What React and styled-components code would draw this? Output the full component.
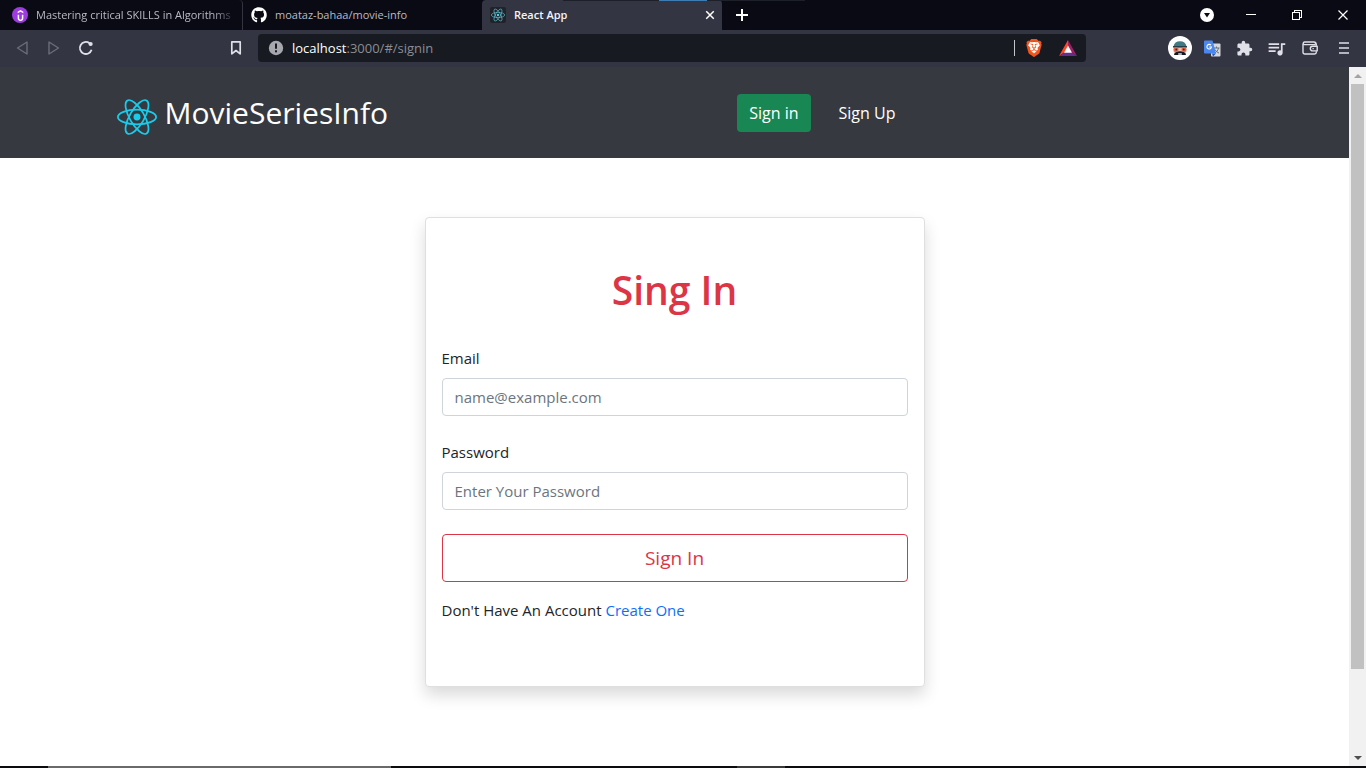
import React from "react";
import styled, { createGlobalStyle, css } from "styled-components";
import { SiUdemy, SiBrave } from "react-icons/si";
import { FaGithub } from "react-icons/fa";
import { MdExtension, MdQueueMusic } from "react-icons/md";

const GlobalStyle = createGlobalStyle`
  *, *::before, *::after { box-sizing: border-box; }
  body {
    margin: 0;
    font-family: "Segoe UI", "Open Sans", "Noto Sans", sans-serif;
    font-size: 15px;
    line-height: 24px;
    color: #212529;
    background: #fff;
  }
  button, input { font: inherit; }
`;

const Window = styled.div`
  display: flex;
  flex-direction: column;
  min-height: 100vh;
`;

const plainButton = css`
  display: flex;
  align-items: center;
  justify-content: center;
  padding: 0;
  border: 0;
  background: none;
  cursor: pointer;
`;

/* ---------- tab strip ---------- */

const TabStrip = styled.header`
  position: relative;
  display: flex;
  height: 30px;
  background: #0a0a15;
`;

const TopEdge = styled.div`
  position: absolute;
  top: 0;
  left: 563px;
  display: flex;
  justify-content: center;
  width: 242px;
  height: 1px;
  background: #1d1f29;

  &::after {
    content: "";
    width: 48px;
    margin-right: 2px;
    background: #3f7cb3;
  }
`;

const TabList = styled.div`
  display: flex;
  padding-left: 4px;
`;

const Tab = styled.div`
  display: flex;
  align-items: center;
  gap: 8px;
  width: ${(p) => (p.$active ? 240 : 239)}px;
  padding: 0 5px 0 8px;
  font-size: 11px;
  line-height: 16px;
  color: ${(p) => (p.$active ? "#f4f4f8" : "#b9bac4")};
  font-weight: ${(p) => (p.$active ? 600 : 400)};
  background: ${(p) => (p.$active ? "#333542" : "transparent")};
  border-radius: 4px 4px 0 0;
  border-right: 1px solid ${(p) => (p.$divided ? "#33343f" : "transparent")};
`;

const TabTitle = styled.span`
  flex: 1;
  min-width: 0;
  overflow: hidden;
  white-space: nowrap;
  ${(p) =>
    p.$fade &&
    css`
      mask-image: linear-gradient(to right, #000 88%, transparent);
    `}
`;

const UdemyBadge = styled.span`
  display: flex;
  align-items: center;
  justify-content: center;
  width: 16px;
  height: 16px;
  border-radius: 50%;
  background: #9d3be0;
  color: #fff;
`;

const ReactBadge = styled.span`
  display: flex;
  align-items: center;
  justify-content: center;
  width: 16px;
  height: 16px;
  border-radius: 2px;
  background: #20232a;
`;

const TabClose = styled.button`
  ${plainButton}
  width: 12px;
  height: 16px;
`;

const NewTab = styled.button`
  ${plainButton}
  width: 40px;
`;

const WindowControls = styled.div`
  display: flex;
  margin-left: auto;
`;

const WindowButton = styled.button`
  ${plainButton}
  width: ${(p) => (p.$narrow ? 42 : 46)}px;
`;

/* ---------- toolbar ---------- */

const Toolbar = styled.div`
  display: flex;
  align-items: center;
  height: 37px;
  padding: 0 6px 1px;
  background: #333542;
`;

const ToolButton = styled.button`
  ${plainButton}
  width: ${(p) => (p.$wide ? 36 : 32)}px;
  height: 32px;
  color: ${(p) => (p.$dim ? "#6b6d79" : "#dfe0e8")};
`;

const BookmarkSlot = styled.div`
  display: flex;
  justify-content: flex-end;
  flex: 0 1 156px;
  padding-right: 6px;
`;

const AddressBar = styled.div`
  display: flex;
  align-items: center;
  flex: 1 1 828px;
  height: 28px;
  padding: 0 1px 0 10px;
  background: #171a21;
  border-radius: 4px;
`;

const Url = styled.span`
  flex: 1;
  margin-left: 8px;
  font-size: 13px;
  line-height: 20px;
  color: #8b8d93;

  b { font-weight: 400; color: #fff; }
`;

const AddressDivider = styled.span`
  width: 1px;
  height: 16px;
  margin-right: 2px;
  background: #c4c5ca;
`;

const AddressButton = styled(ToolButton)`
  width: 34px;
`;

const ToolGroup = styled.div`
  display: flex;
  justify-content: flex-end;
  flex: 0 1 274px;
`;

/* ---------- page ---------- */

const Viewport = styled.div`
  display: flex;
  flex: 1;
`;

const Page = styled.div`
  flex: 1;
  min-width: 0;
`;

const NavBar = styled.nav`
  background: #363a40;
`;

const NavInner = styled.div`
  display: flex;
  align-items: center;
  max-width: 1140px;
  min-height: 91px;
  margin: 0 auto;
  padding: 0 12px;
`;

const Brand = styled.a`
  display: flex;
  align-items: center;
  gap: 8px;
  font-size: 30px;
  line-height: 48px;
  color: #fff;
  text-decoration: none;

  svg { margin-top: 8px; }
`;

const NavLinks = styled.div`
  display: flex;
  flex: 1;
  justify-content: center;
  gap: 16px;
  padding-left: 24px;
`;

const NavLink = styled.a`
  padding: 7px 12px;
  border-radius: 4px;
  font-size: 16px;
  color: #fff;
  text-decoration: none;
  background: ${(p) => (p.$active ? "#198754" : "transparent")};
`;

const Main = styled.main`
  display: flex;
  justify-content: center;
  padding: 59px 16px 48px;
`;

const Card = styled.form`
  width: 100%;
  max-width: 500px;
  padding: 48px 16px 64px;
  border: 1px solid #dfdfdf;
  border-radius: 4px;
  background: #fff;
  box-shadow: 0 8px 16px rgba(0, 0, 0, 0.15);
`;

const Title = styled.h1`
  margin: 0 0 32px;
  font-size: 39px;
  line-height: 48px;
  font-weight: 600;
  text-align: center;
  color: #dc3545;
`;

const Field = styled.div`
  margin-bottom: 24px;
`;

const Label = styled.label`
  display: block;
  margin-bottom: 8px;
`;

const Input = styled.input`
  display: block;
  width: 100%;
  height: 38px;
  padding: 6px 12px;
  border: 1px solid #ced4da;
  border-radius: 4px;
  background: #fff;
  color: #212529;

  &::placeholder { color: #6c757d; opacity: 1; }
`;

const Submit = styled.button`
  display: block;
  width: 100%;
  height: 48px;
  margin-bottom: 16px;
  border: 1px solid #dc3545;
  border-radius: 4px;
  background: #fff;
  color: #dc3545;
  font-size: 19px;
  line-height: 30px;
  cursor: pointer;
`;

const Hint = styled.p`
  margin: 0;

  a { color: #0d6efd; text-decoration: none; }
`;

/* ---------- scrollbar and taskbar edge ---------- */

const ScrollRail = styled.div`
  display: flex;
  flex-direction: column;
  width: 17px;
  background: #f1f1f1;
`;

const ScrollArrow = styled.button`
  ${plainButton}
  height: 17px;
`;

const ScrollTrack = styled.div`
  flex: 1;
  padding: 0 2px;
`;

const ScrollThumb = styled.div`
  height: 88%;
  background: #c1c1c1;
`;

const TaskbarEdge = styled.div`
  display: flex;
  gap: 346px;
  height: 2px;
  padding-left: 48px;
  background: #0c0c0f;
`;

const TaskbarItem = styled.span`
  width: ${(p) => p.$width}px;
  background: ${(p) => p.$tone};
`;

/* ---------- drawings ---------- */

const Atom = ({ width, height, color, stroke = 1 }) => (
  <svg width={width} height={height} viewBox="-11.5 -10.2 23 20.4" aria-hidden="true">
    <circle r="2" fill={color} />
    <g fill="none" stroke={color} strokeWidth={stroke}>
      <ellipse rx="11" ry="4.2" />
      <ellipse rx="11" ry="4.2" transform="rotate(60)" />
      <ellipse rx="11" ry="4.2" transform="rotate(120)" />
    </g>
  </svg>
);

const Triangle = ({ flip }) => (
  <svg width="14" height="16" viewBox="0 0 14 16" fill="none" stroke="currentColor" strokeWidth="1.4" strokeLinejoin="round">
    <path d={flip ? "M2 2v12l9.500-6z" : "M12 2v12L2.500 8z"} />
  </svg>
);

const Reload = () => (
  <svg width="16" height="16" viewBox="0 0 16 16" fill="none" stroke="currentColor" strokeWidth="1.8">
    <path d="M13.600 9.800A6 6 0 1 1 11.500 3.200" />
    <circle cx="12.600" cy="4" r="2.100" fill="currentColor" stroke="none" />
  </svg>
);

const Bookmark = () => (
  <svg width="12" height="16" viewBox="0 0 12 16" fill="none" stroke="currentColor" strokeWidth="1.700" strokeLinejoin="round">
    <path d="M1.800 1.800h8.400v12L6 10.500l-4.200 3.300z" />
  </svg>
);

const InfoDot = () => (
  <svg width="16" height="16" viewBox="0 0 16 16" aria-hidden="true">
    <circle cx="8" cy="8" r="7.200" fill="#a6a8ae" />
    <path d="M8 3.500v5.200" stroke="#171a21" strokeWidth="2" />
    <rect x="7" y="10.300" width="2" height="2" fill="#171a21" />
  </svg>
);

const BraveLion = () => (
  <svg width="18" height="18" viewBox="0 0 24 24" aria-hidden="true">
    <path d="M5 4h14l1 5-3 9-5 4-5-4-3-9z" fill="#fff" />
    <SiBrave size={24} color="#f2541b" />
  </svg>
);

const BatTriangle = () => (
  <svg width="18" height="16" viewBox="0 0 18 16" aria-hidden="true">
    <path d="M9 0L0 16l9-6z" fill="#ff4724" />
    <path d="M9 0l9 16-9-6z" fill="#9e1f63" />
    <path d="M0 16h18l-9-6z" fill="#662d91" />
    <path d="M9 5.500l4 7.200H5z" fill="#fff" />
  </svg>
);

const Avatar = () => (
  <svg width="24" height="24" viewBox="0 0 24 24" aria-hidden="true">
    <circle cx="12" cy="12" r="12" fill="#fff" />
    <path d="M6 10.500h12l.5 5-1.500 3.500H7l-1.500-3.500z" fill="#f0c4ae" />
    <path d="M5.500 10.500C6 7 8.500 5.200 12 5.200s6 1.800 6.500 5.300z" fill="#3f7a85" />
    <path d="M5 10h14v1.600H5z" fill="#27404a" />
    <path d="M6 19c.3-2.600 2.500-3.800 6-3.800s5.700 1.200 6 3.800z" fill="#171a24" />
    <circle cx="8" cy="13.600" r="2.500" fill="#e2674c" />
    <circle cx="16" cy="13.600" r="2.500" fill="#e2674c" />
    <circle cx="8.300" cy="13.400" r="1" fill="#2b2f3a" />
    <circle cx="15.700" cy="13.400" r="1" fill="#2b2f3a" />
    <path d="M10.200 18h3.600" stroke="#e8ecef" strokeWidth="1.400" />
  </svg>
);

const Translate = () => (
  <svg width="17" height="17" viewBox="0 0 17 17" aria-hidden="true">
    <rect x="7" y="3.500" width="9.500" height="13" rx="1" fill="#d6d8dd" />
    <path d="M9.500 8h6M12.500 6.500V8M14.500 8c-.5 2.500-2 4-3.500 5M11 9.500c1 2 2.500 3 4 3.500" fill="none" stroke="#66727d" />
    <path d="M8 13.500h4l-3 3z" fill="#2753b5" />
    <path d="M1 .5h7.500l3.500 13H1a1 1 0 0 1-1-1v-11a1 1 0 0 1 1-1z" fill="#4a87ee" />
    <path d="M7 5.200A2.300 2.300 0 1 0 7.500 7H5.200" fill="none" stroke="#fff" strokeWidth="1.100" />
  </svg>
);

const Wallet = () => (
  <svg width="16" height="14" viewBox="0 0 16 14" fill="none" stroke="currentColor" strokeWidth="1.400" strokeLinejoin="round">
    <path d="M14.300 4.800V3.500A1.700 1.700 0 0 0 12.600 1.800M1 2.800v8.500A1.700 1.700 0 0 0 2.700 13h9.900a1.700 1.700 0 0 0 1.700-1.700v-1" />
    <path d="M13.800 3.600H2.500A1.300 1.300 0 0 1 2.500 1h9.600a1.700 1.700 0 0 1 1.700 1.500" />
    <path d="M15.200 5.300h-4.600a2.300 2.300 0 0 0 0 4.600h4.600z" />
    <path d="M10.500 7.600h1.300" />
  </svg>
);

const Menu = () => (
  <svg width="10" height="14" viewBox="0 0 10 14" stroke="currentColor" strokeWidth="1.600">
    <path d="M0 2h10M0 7h10M0 12h10" />
  </svg>
);

const Cross = ({ size, stroke }) => (
  <svg width={size} height={size} viewBox="0 0 12 12" stroke="#fff" strokeWidth={stroke}>
    <path d="M1.500 1.500l9 9M10.500 1.500l-9 9" />
  </svg>
);

const Plus = () => (
  <svg width="12" height="12" viewBox="0 0 12 12" stroke="#fff" strokeWidth="2">
    <path d="M6 0v12M0 6h12" />
  </svg>
);

const DropDot = () => (
  <svg width="14" height="14" viewBox="0 0 14 14">
    <circle cx="7" cy="7" r="7" fill="#fff" />
    <path d="M4 5h6l-3 4.500z" fill="#0a0a15" />
  </svg>
);

const Minimize = () => (
  <svg width="10" height="10" viewBox="0 0 10 10" stroke="#fff" shapeRendering="crispEdges">
    <path d="M0 4.500h10" />
  </svg>
);

const Restore = () => (
  <svg width="10" height="10" viewBox="0 0 10 10" fill="none" stroke="#fff" shapeRendering="crispEdges">
    <path d="M.5 2.500h7v7h-7zM2.500 2.500v-2h7v7h-2" />
  </svg>
);

const Arrow = ({ down }) => (
  <svg width="8" height="4" viewBox="0 0 8 4">
    <path d={down ? "M0 0h8L4 4z" : "M0 4h8L4 0z"} fill={down ? "#505050" : "#a3a3a3"} />
  </svg>
);

export default function App() {
  return (
    <Window>
      <GlobalStyle />

      <TabStrip>
        <TabList>
          <Tab $divided>
            <UdemyBadge><SiUdemy size={11} /></UdemyBadge>
            <TabTitle $fade>Mastering critical SKILLS in Algorithms</TabTitle>
          </Tab>
          <Tab>
            <FaGithub size={16} color="#fff" />
            <TabTitle>moataz-bahaa/movie-info</TabTitle>
          </Tab>
          <Tab $active>
            <ReactBadge><Atom width={14} height={14} color="#61c9de" /></ReactBadge>
            <TabTitle>React App</TabTitle>
            <TabClose aria-label="Close tab"><Cross size={10} stroke={1.8} /></TabClose>
          </Tab>
        </TabList>
        <NewTab aria-label="New tab"><Plus /></NewTab>
        <WindowControls>
          <WindowButton $narrow aria-label="Search tabs"><DropDot /></WindowButton>
          <WindowButton aria-label="Minimize"><Minimize /></WindowButton>
          <WindowButton aria-label="Restore"><Restore /></WindowButton>
          <WindowButton aria-label="Close"><Cross size={12} stroke={1.2} /></WindowButton>
        </WindowControls>
        <TopEdge />
      </TabStrip>

      <Toolbar>
        <ToolButton $dim aria-label="Back"><Triangle /></ToolButton>
        <ToolButton $dim aria-label="Forward"><Triangle flip /></ToolButton>
        <ToolButton aria-label="Reload"><Reload /></ToolButton>
        <BookmarkSlot>
          <ToolButton aria-label="Bookmark"><Bookmark /></ToolButton>
        </BookmarkSlot>
        <AddressBar>
          <InfoDot />
          <Url><b>localhost</b>:3000/#/signin</Url>
          <AddressDivider />
          <AddressButton aria-label="Brave Shields"><BraveLion /></AddressButton>
          <AddressButton aria-label="Brave Rewards"><BatTriangle /></AddressButton>
        </AddressBar>
        <ToolGroup>
          <ToolButton aria-label="Profile"><Avatar /></ToolButton>
          <ToolButton aria-label="Translate"><Translate /></ToolButton>
          <ToolButton aria-label="Extensions"><MdExtension size={17} /></ToolButton>
          <ToolButton aria-label="Playlist"><MdQueueMusic size={21} /></ToolButton>
          <ToolButton $wide aria-label="Wallet"><Wallet /></ToolButton>
          <ToolButton aria-label="Menu"><Menu /></ToolButton>
        </ToolGroup>
      </Toolbar>

      <Viewport>
        <Page>
          <NavBar>
            <NavInner>
              <Brand href="#/">
                <Atom width={40} height={36} color="#18cdec" />
                MovieSeriesInfo
              </Brand>
              <NavLinks>
                <NavLink href="#/signin" $active>Sign in</NavLink>
                <NavLink href="#/signup">Sign Up</NavLink>
              </NavLinks>
            </NavInner>
          </NavBar>
          <Main>
            <Card>
              <Title>Sing In</Title>
              <Field>
                <Label htmlFor="email">Email</Label>
                <Input id="email" type="email" placeholder="name@example.com" />
              </Field>
              <Field>
                <Label htmlFor="password">Password</Label>
                <Input id="password" type="password" placeholder="Enter Your Password" />
              </Field>
              <Submit type="button">Sign In</Submit>
              <Hint>Don't Have An Account <a href="#/signup">Create One</a></Hint>
            </Card>
          </Main>
        </Page>
        <ScrollRail>
          <ScrollArrow aria-label="Scroll up"><Arrow /></ScrollArrow>
          <ScrollTrack><ScrollThumb /></ScrollTrack>
          <ScrollArrow aria-label="Scroll down"><Arrow down /></ScrollArrow>
        </ScrollRail>
      </Viewport>

      <TaskbarEdge>
        <TaskbarItem $width={343} $tone="#6a6a6a" />
        <TaskbarItem $width={48} $tone="#3a3a3a" />
      </TaskbarEdge>
    </Window>
  );
}
